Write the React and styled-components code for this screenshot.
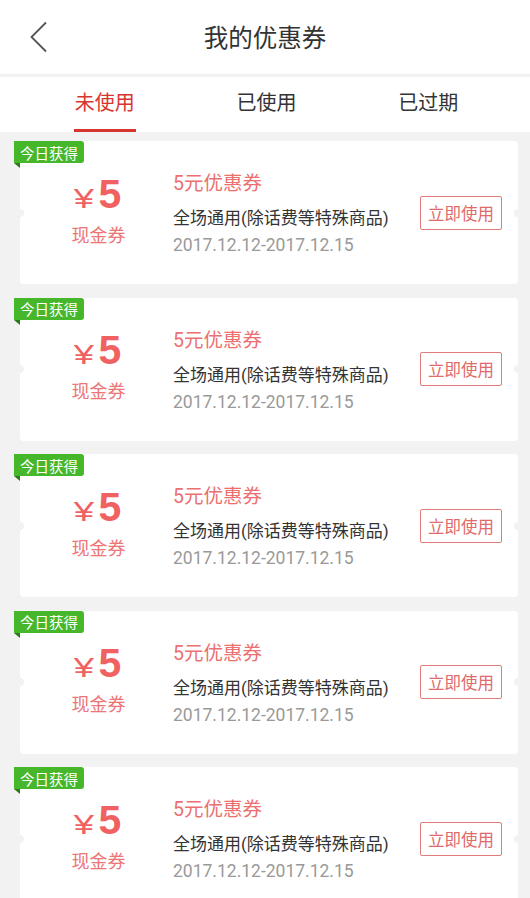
import React from "react";
import styled, { createGlobalStyle } from "styled-components";

const GlobalStyle = createGlobalStyle`
  body {
    margin: 0;
    background: #f2f2f2;
    font-family: Roboto, "Noto Sans CJK SC", sans-serif;
  }
`;

const Page = styled.div`
  width: 530px;
  min-height: 898px;
  background: #f2f2f2;
`;

const Header = styled.header`
  height: 74px;
  background: #fff;
  display: grid;
  grid-template-columns: 80px 1fr 80px;
  align-items: center;
`;

const BackBtn = styled.div`
  padding-left: 29px;
  display: flex;
  align-items: center;
  svg {
    display: block;
  }
`;

const Title = styled.h1`
  margin: 0;
  text-align: center;
  font-size: 24.5px;
  font-weight: 400;
  color: #333;
  padding-bottom: 2px;
`;

const TabBar = styled.nav`
  margin-top: 3px;
  height: 55px;
  background: #fff;
  display: grid;
  grid-template-columns: repeat(3, 1fr);
  padding: 0 21px 0 24px;
`;

const Tab = styled.div`
  justify-self: center;
  display: flex;
  align-items: center;
  padding: 0 1px 4px;
  font-size: 20px;
  color: ${(p) => (p.$active ? "#d8352f" : "#333")};
  border-bottom: 3px solid ${(p) => (p.$active ? "#d8352f" : "transparent")};
`;

const List = styled.div`
  padding: 9px 12px 0 20px;
`;

const Card = styled.div`
  position: relative;
  height: 143px;
  margin-bottom: 13.5px;
  background: #fff;
  border-radius: 4px;
  display: grid;
  grid-template-columns: 153px 1fr auto;
  align-items: center;

  &::before,
  &::after {
    content: "";
    position: absolute;
    top: 50%;
    width: 8px;
    height: 8px;
    margin-top: -4px;
    border-radius: 50%;
    background: #f2f2f2;
  }
  &::before {
    left: -4px;
  }
  &::after {
    right: -4px;
  }
`;

const Badge = styled.span`
  position: absolute;
  top: 0;
  left: -6px;
  height: 22px;
  padding: 0 6px;
  display: flex;
  align-items: center;
  background: #46b72b;
  color: #fff;
  font-size: 14.5px;
  border-radius: 0 3px 3px 0;

  &::after {
    content: "";
    position: absolute;
    left: 0;
    top: 22px;
    border-top: 5px solid #2b7a17;
    border-left: 6px solid transparent;
  }
`;

const Amount = styled.div`
  display: flex;
  flex-direction: column;
  align-items: center;
  padding-left: 4px;
  padding-bottom: 8px;
`;

const Price = styled.div`
  display: flex;
  align-items: baseline;
  gap: 7px;
  color: #f06262;
  font-family: "Liberation Sans", Arial, sans-serif;
`;

const Yen = styled.span`
  display: inline-block;
  font-size: 28px;
  transform: scaleX(1.3);
`;

const Num = styled.span`
  font-size: 41px;
  font-weight: 700;
  line-height: 46px;
`;

const Kind = styled.div`
  margin-top: 4px;
  font-size: 18px;
  color: #ec7676;
`;

const Info = styled.div`
  display: flex;
  flex-direction: column;
  padding-top: 3px;
`;

const Name = styled.div`
  font-size: 19.5px;
  color: #ec7070;
  line-height: 26px;
`;

const Desc = styled.div`
  margin-top: 9px;
  font-size: 17px;
  color: #333;
  line-height: 24px;
`;

const Dates = styled.div`
  margin-top: 3px;
  font-size: 17.5px;
  color: #999;
  line-height: 24px;
`;

const UseBtn = styled.div`
  margin-right: 16px;
  width: 82px;
  height: 34px;
  box-sizing: border-box;
  border: 1px solid #e17c7c;
  border-radius: 2px;
  display: flex;
  align-items: center;
  justify-content: center;
  font-size: 16.5px;
  color: #e06a6a;
`;

const tabs = ["未使用", "已使用", "已过期"];

const coupons = Array.from({ length: 5 }, (_, i) => ({
  id: i,
  amount: 5,
  name: "5元优惠券",
  desc: "全场通用(除话费等特殊商品)",
  dates: "2017.12.12-2017.12.15",
}));

export default function App() {
  return (
    <Page>
      <GlobalStyle />
      <Header>
        <BackBtn>
          <svg width="20" height="32" viewBox="0 0 20 32" fill="none">
            <path d="M17 1.5 L2.5 16 L17 30.5" stroke="#555" strokeWidth="1.8" />
          </svg>
        </BackBtn>
        <Title>我的优惠券</Title>
        <div />
      </Header>
      <TabBar>
        {tabs.map((t, i) => (
          <Tab key={t} $active={i === 0}>
            {t}
          </Tab>
        ))}
      </TabBar>
      <List>
        {coupons.map((c) => (
          <Card key={c.id}>
            <Badge>今日获得</Badge>
            <Amount>
              <Price>
                <Yen>¥</Yen>
                <Num>{c.amount}</Num>
              </Price>
              <Kind>现金券</Kind>
            </Amount>
            <Info>
              <Name>{c.name}</Name>
              <Desc>{c.desc}</Desc>
              <Dates>{c.dates}</Dates>
            </Info>
            <UseBtn>立即使用</UseBtn>
          </Card>
        ))}
      </List>
    </Page>
  );
}
